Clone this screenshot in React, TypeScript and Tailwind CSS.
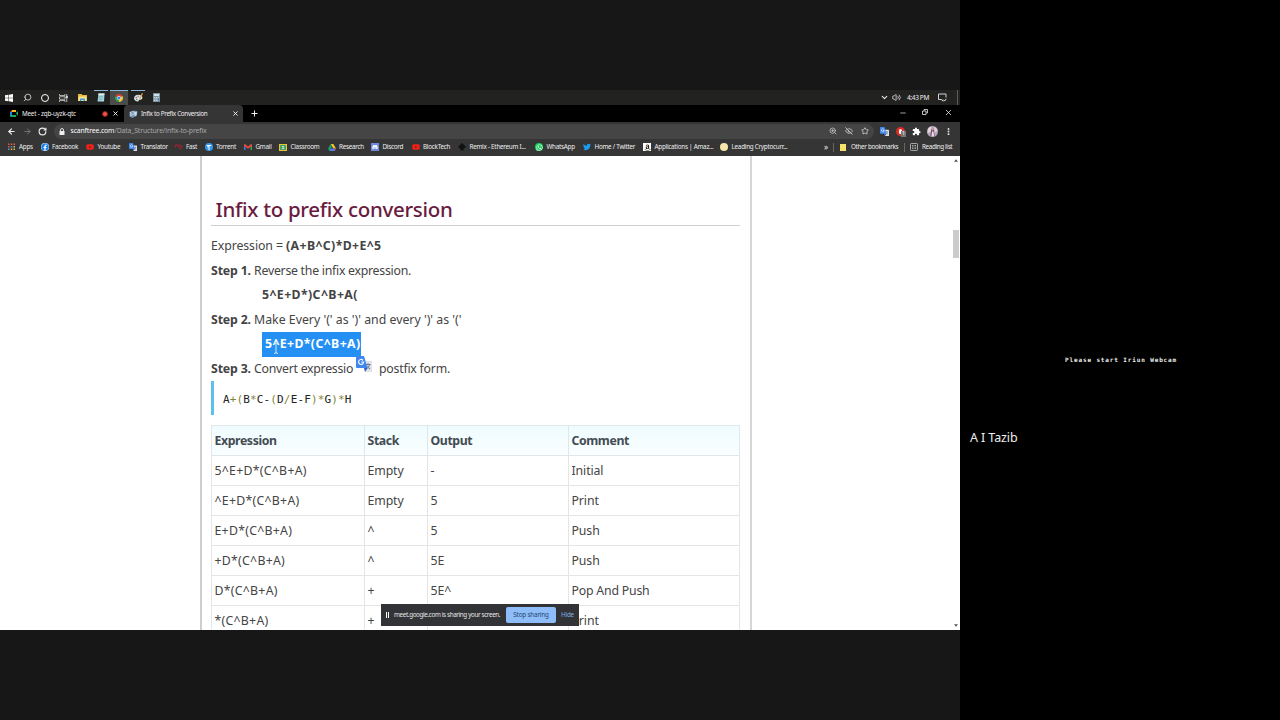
import React from "react";
import {
  Search, ArrowLeft, ArrowRight, RotateCw, Lock, X, Plus, Minus, ZoomIn, EyeOff, Star,
  ChevronDown, Volume2, EllipsisVertical,
} from "lucide-react";
import { FaFacebook, FaYoutube, FaWhatsapp, FaTwitter, FaAmazon, FaDiscord } from "react-icons/fa";
import { MdExtension } from "react-icons/md";

function TranslateIcon({ className = "" }: { className?: string }) {
  return (
    <svg viewBox="0 0 16 16" className={className}>
      <path d="M6 5h9a1 1 0 0 1 1 1v9a1 1 0 0 1-1 1H9z" fill="#dfe3e8" />
      <path d="M9.5 8.5h5M12 7.3v1.2M13.7 8.5c-.5 2-2 3.5-3.7 4.500M10.700 9.500c.6 1.500 1.800 2.600 3.500 3.300" stroke="#6b7785" strokeWidth="1" fill="none" />
      <path d="M1 0h7l3.500 12H1a1 1 0 0 1-1-1V1a1 1 0 0 1 1-1z" fill="#3f86ee" />
      <path d="M8 12h3.500L9 16z" fill="#2b5fc4" />
      <path d="M7 4.300A2.500 2.500 0 1 0 7.600 6H5.300" stroke="#fff" strokeWidth="1.100" fill="none" />
    </svg>
  );
}

function Chrome() {
  return (
    <svg viewBox="0 0 16 16" className="size-[8px]">
      <path d="M8 8 1.070 4A8 8 0 0 1 14.930 4z" fill="#e2402f" />
      <path d="M8 8 14.930 4A8 8 0 0 1 8 16z" fill="#f7c928" />
      <path d="M8 8v8A8 8 0 0 1 1.070 4z" fill="#2fa552" />
      <circle cx="8" cy="8" r="3.800" fill="#fff" />
      <circle cx="8" cy="8" r="3" fill="#3b7de9" />
    </svg>
  );
}

function Meet() {
  return (
    <svg viewBox="0 0 16 14" className="h-[7px] w-[8px]">
      <path d="M0 4 4 0v4z" fill="#e5433a" />
      <path d="M4 0h8v4H4z" fill="#f9bd16" />
      <path d="M0 4h4v6H0z" fill="#2a7ff0" />
      <path d="M0 10h12V7l4 5V2l-4 4v8H2a2 2 0 0 1-2-2z" fill="#16a757" />
    </svg>
  );
}

function Taskbar() {
  return (
    <div className="flex h-[15px] w-[960px] items-center bg-[#222221] text-[#eee]">
      <div className="w-[5px]" />
      <div className="w-[18px]">
        <svg viewBox="0 0 16 16" className="size-[8px]" fill="#fff">
          <path d="M0 2.500 7 1.500V7.500H0zM8 1.300 16 0v7.500H8zM0 8.500h7v6L0 13.500zM8 8.500h8V16L8 14.700z" />
        </svg>
      </div>
      <div className="w-[18px]"><Search className="size-[9px] -scale-x-100" strokeWidth={2} /></div>
      <div className="w-[18px]"><div className="size-[8px] rounded-full border-[1.500px] border-white" /></div>
      <div className="w-[19px]">
        <svg viewBox="0 0 18 16" className="h-[8px] w-[9px]" fill="none" stroke="#ddd" strokeWidth="1.500">
          <path d="M1 0v3h11V0M1 16v-3h11v3M1 5.500h11v5H1zM15.500 0v16" />
          <path d="M14 4.500h3v3h-3z" fill="#ddd" />
        </svg>
      </div>
      <div className="w-[14px]">
        <svg viewBox="0 0 18 14" className="h-[7px] w-[9px]">
          <path d="M0 0h7l2 2h9v12H0z" fill="#e8b83c" />
          <path d="M1 5h16v9H1z" fill="#fbe28c" />
          <path d="M4 9h10v5h-3v-2H7v2H4z" fill="#3d9be0" />
        </svg>
      </div>
      <div className="flex h-full w-[18px] flex-col items-center">
        <div className="h-[1px] w-[14px] bg-[#8db5d5]" />
        <svg viewBox="0 0 16 18" className="mt-[2px] h-[9px] w-[8px]">
          <path d="M3 1h12l-1 16H1z" fill="#a4d5db" />
          <path d="M3 1h12l-.4 3H2.500z" fill="#e6eff0" />
          <path d="M3.500 7h8M3 10h8M3 13h7" stroke="#619da9" />
        </svg>
      </div>
      <div className="flex h-full w-[18px] flex-col items-center bg-[#4a4b4b]">
        <div className="mb-[3px] h-[1px] w-full bg-[#8db5d5]" />
        <Chrome />
      </div>
      <div className="flex h-full w-[20px] flex-col items-center">
        <div className="h-[1px] w-[14px] bg-[#8db5d5]" />
        <svg viewBox="0 0 16 16" className="mt-[2px] size-[9px]">
          <path d="M8 3C3 3 0 6 0 9.500S3 15 7 15c2 0 1-3 3-3 3 0 5-1 5-4s-3-5-7-5z" fill="#dce5ea" />
          <circle cx="4" cy="8" r="1.500" fill="#d84a3f" />
          <circle cx="7.500" cy="6" r="1.400" fill="#459fd7" />
          <circle cx="5" cy="11.500" r="1.500" fill="#3aa563" />
          <path d="M9 10 14 0l2 1-5 10z" fill="#e5a73b" />
        </svg>
      </div>
      <div className="w-[730px] pl-[5px]">
        <svg viewBox="0 0 14 18" className="h-[9px] w-[7px]">
          <path d="M0 0h14v18H0z" fill="#7d929f" />
          <path d="M2 2h10v4H2z" fill="#cfe3ee" />
          <path d="M2 9h3M6 9h3M10 9h2M2 12h3M6 12h3M2 15h3M6 15h3" stroke="#dde7ed" strokeWidth="1.500" />
          <path d="M10 11h2v5h-2z" fill="#3f8fd0" />
        </svg>
      </div>
      <div className="w-[12px] pl-[2px]"><ChevronDown className="size-[9px]" strokeWidth={2.8} /></div>
      <div className="w-[15px] pl-[2px]"><Volume2 className="size-[9px]" strokeWidth={2} /></div>
      <div className="w-[33px] pl-0.5 text-[6.500px] tracking-[-0.350px] whitespace-nowrap">4:43 PM</div>
      <div className="flex-1">
        <svg viewBox="0 0 18 18" className="size-[9px]" fill="none" stroke="#e5e5e5" strokeWidth="1.800">
          <path d="M16 9V2H1v11h6l3 3.500V13M12 15.500a4 4 0 0 0 4-4" />
        </svg>
      </div>
      <div className="mr-[2px] h-full w-px bg-[#5b5b5b]" />
    </div>
  );
}

function TabBar() {
  return (
    <div className="flex h-[17px] w-[960px] items-center bg-black text-[6.300px] whitespace-nowrap text-[#eee]">
      <div className="flex w-[124px] items-center pl-[10px]">
        <Meet />
        <span className="ml-[4px] w-[80px] tracking-[-0.200px]">Meet - zqb-uyzk-qtc</span>
        <span className="flex size-[6px] items-center justify-center rounded-full border border-[#8c1d18] bg-[#f0544a]" />
        <X className="ml-[4px] size-[7px] text-white" strokeWidth={3} />
      </div>
      <div className="flex h-full w-[119px] items-center rounded-t-[4px] bg-[#353536] pl-[5px]">
        <svg viewBox="0 0 18 16" className="h-[8px] w-[9px]">
          <path d="m1 4 9-3 7 2-2 9-8 4-6-3z" fill="#718fa9" />
          <path d="m2 4 8-2 1 6-8 5zM11 4l5-1-1 8-4 1z" fill="#c8dcec" />
          <path d="m4 6 5-2M4 9l6-3" stroke="#4f769b" strokeWidth="1.500" />
        </svg>
        <span className="ml-[3px] w-[91px] tracking-[-0.310px]">Infix to Prefix Conversion</span>
        <X className="size-[7px] text-white" strokeWidth={3} />
      </div>
      <Plus className="ml-[7px] size-[9px] text-white" strokeWidth={2.500} />
      <div className="flex-1" />
      <Minus className="mr-[15px] mb-[2px] size-[8px]" strokeWidth={2} />
      <svg viewBox="0 0 12 12" className="mr-[16px] mb-[3px] size-[6px]" fill="none" stroke="#ddd" strokeWidth="1.700">
        <path d="M1 4h7v7H1zM4 3.500V1h7v7H8.500" />
      </svg>
      <X className="mr-[7px] mb-[2px] size-[9px]" strokeWidth={2} />
    </div>
  );
}

function Toolbar() {
  return (
    <div className="flex h-[17px] w-[960px] items-center bg-[#353536] pt-px text-[#eee]">
      <ArrowLeft className="ml-[6.500px] size-[9px]" strokeWidth={3} />
      <ArrowRight className="ml-[7px] size-[9px] text-[#777]" strokeWidth={2.500} />
      <RotateCw className="ml-[6.500px] size-[9px]" strokeWidth={3} />
      <div className="ml-[6.500px] flex h-[15px] w-[820px] items-center rounded-full bg-[#454546]">
        <svg viewBox="0 0 12 14" className="ml-[5px] h-[7px] w-[6px]" fill="#eee">
          <path d="M1 6h10v8H1z" />
          <path d="M3 6V4a3 3 0 0 1 6 0v2" fill="none" stroke="#eee" strokeWidth="1.800" />
        </svg>
        <span className="ml-[6px] text-[6.800px] tracking-[-0.110px] whitespace-nowrap text-[#a8a8a8]">
          <span className="text-white">scanftree.com</span>/Data_Structure/infix-to-prefix
        </span>
        <span className="flex-1" />
        <ZoomIn className="mr-[8px] size-[8px] text-[#ccc]" strokeWidth={2.300} />
        <EyeOff className="mr-[8px] size-[8px] text-[#ccc]" strokeWidth={2.500} />
        <Star className="mr-[5px] size-[8px] text-[#ddd]" strokeWidth={2.300} />
      </div>
      <TranslateIcon className="ml-[6.500px] size-[9px]" />
      <div className="relative ml-[7px] flex size-[9px] items-center justify-center rounded-full bg-[#da2d24]">
        <span className="h-[5px] w-[3px] rounded-sm bg-white" />
        <span className="absolute top-[4px] left-[5px] flex h-[6px] w-[5px] items-center justify-center bg-[#777] text-[5px] text-white">1</span>
      </div>
      <MdExtension className="ml-[6.500px] size-[9px] text-white" />
      <svg viewBox="0 0 20 20" className="ml-[6px] size-[11px]">
        <circle cx="10" cy="10" r="10" fill="#b7a6bb" />
        <path d="M2 5q3-4 6-4l-1 9-6 3zM13 1q5 2 6 8l-5 2z" fill="#e3d5e2" />
        <path d="M8 6q2-3 4 0l2 13H6z" fill="#713f58" />
        <circle cx="10" cy="6" r="2" fill="#d9a49a" />
        <path d="M9 10h3l1 9H8z" fill="#e7dce9" />
      </svg>
      <EllipsisVertical className="ml-[6px] size-[9px]" strokeWidth={3} />
    </div>
  );
}

const bookmarks: { w: string; name: string; icon: React.ReactNode }[] = [
  {
    w: "w-[33px]", name: "Apps", icon: (
      <svg viewBox="0 0 14 16" className="h-[8px] w-[7px]">
        <path d="M0 1h3v3H0zM0 6h3v3H0z" fill="#e15347" />
        <path d="M5.500 1h3v3h-3zM11 1h3v3h-3z" fill="#e1694f" />
        <path d="M5.500 6h3v3h-3zM0 11h3v3H0z" fill="#4f9cd9" />
        <path d="M11 6h3v3h-3zM5.500 11h3v3h-3zM11 11h3v3h-3z" fill="#d9bc4f" />
      </svg>
    ),
  },
  { w: "w-[45.500px]", name: "Facebook", icon: <FaFacebook className="size-[8px] rounded-full bg-white text-[#1680f0]" /> },
  { w: "w-[43px]", name: "Youtube", icon: <FaYoutube className="size-[8px] text-[#f32016]" /> },
  { w: "w-[45.500px]", name: "Translator", icon: <TranslateIcon className="size-[8px]" /> },
  {
    w: "w-[30px]", name: "Fast", icon: (
      <svg viewBox="0 0 16 16" className="size-[8px]" fill="none" stroke="#a51f2e" strokeWidth="2.500">
        <path d="M1 9V4h5l5 9M9 4q5 0 5 6" />
      </svg>
    ),
  },
  {
    w: "w-[39.500px]", name: "Torrent", icon: (
      <svg viewBox="0 0 16 16" className="size-[8px]">
        <circle cx="8" cy="8" r="8" fill="#3496ed" />
        <path d="M3.500 5h9M8 5v9M6 5v4" stroke="#fff" strokeWidth="2" fill="none" />
      </svg>
    ),
  },
  {
    w: "w-[35px]", name: "Gmail", icon: (
      <svg viewBox="0 0 16 12" className="h-[6px] w-[8px]">
        <path d="M0 1h3v11H0z" fill="#3c7de5" />
        <path d="M13 1h3v11h-3z" fill="#33a853" />
        <path d="M0 1.500 2 0l6 5 6-5 2 1.500V4L8 9.500 0 4z" fill="#e6463b" />
      </svg>
    ),
  },
  {
    w: "w-[48.500px]", name: "Classroom", icon: (
      <svg viewBox="0 0 16 14" className="h-[7px] w-[8px]">
        <path d="M0 0h16v14H0z" fill="#eec535" />
        <path d="M2 2h12v10H2z" fill="#48a260" />
        <circle cx="8" cy="5.500" r="1.700" fill="#fff" />
        <path d="M4.500 10q3.500-3.500 7 0z" fill="#fff" />
      </svg>
    ),
  },
  {
    w: "w-[43.500px]", name: "Research", icon: (
      <svg viewBox="0 0 16 14" className="h-[7px] w-[8px]">
        <path d="M5.500 0h5L16 9h-5.200z" fill="#f8c72c" />
        <path d="M5.500 0 8 4.500 2.700 14 0 9.300z" fill="#1ba261" />
        <path d="M5.400 9H16l-2.700 5H2.700z" fill="#4384ef" />
        <path d="M12 9h4l-2.700 5z" fill="#e5473c" />
      </svg>
    ),
  },
  { w: "w-[40.500px]", name: "Discord", icon: <span className="flex size-[8px] items-center justify-center bg-[#7089dc]"><FaDiscord className="size-[6px] text-white" /></span> },
  { w: "w-[46.500px]", name: "BlockTech", icon: <FaYoutube className="size-[8px] text-[#f32016]" /> },
  {
    w: "w-[77px]", name: "Remix - Ethereum I...", icon: (
      <svg viewBox="0 0 16 16" className="size-[8px]" fill="#111">
        <path d="M8 0l4 4 4 4-4 3-1 1v3H5v-3L4 11 0 8l4-4z" />
      </svg>
    ),
  },
  { w: "w-[48px]", name: "WhatsApp", icon: <span className="flex size-[8px] items-center justify-center rounded-full bg-[#1ad05c]"><FaWhatsapp className="size-[7px] text-white" /></span> },
  { w: "w-[60px]", name: "Home / Twitter", icon: <FaTwitter className="size-[8px] text-[#1d9bf0]" /> },
  { w: "w-[77px]", name: "Applications | Amaz...", icon: <span className="flex size-[8px] items-center justify-center bg-white"><FaAmazon className="size-[7px] text-[#2a2114]" /></span> },
  { w: "w-[104px]", name: "Leading Cryptocurr...", icon: <span className="block size-[8px] rounded-full bg-[#f8e7a9]" /> },
];

function Bookmarks() {
  return (
    <div className="flex h-[17px] w-[960px] items-center bg-[#353536] pb-px pl-[7.500px] text-[6.300px] tracking-[-0.250px] whitespace-nowrap text-[#eee]">
      {bookmarks.map((b) => (
        <div key={b.name} className={`flex shrink-0 items-center ${b.w}`}>
          <span className="flex w-[11.500px] shrink-0">{b.icon}</span>
          <span>{b.name}</span>
        </div>
      ))}
      <span className="w-[9px] text-[8px]">»</span>
      <span className="h-[9px] w-px bg-[#666]" />
      <span className="ml-[6px] h-[7px] w-[6px] bg-[#f8e26c]" />
      <span className="ml-[5px] w-[53px] tracking-[-0.330px]">Other bookmarks</span>
      <span className="h-[9px] w-px bg-[#666]" />
      <svg viewBox="0 0 16 16" className="ml-[5px] size-[8px]" fill="none" stroke="#ccc" strokeWidth="1.500">
        <rect x="1" y="1" width="14" height="14" rx="1.500" />
        <path d="M4 5h3M4 8h3M4 11h3M9 5h3M9 8h3M9 11h3" />
      </svg>
      <span className="ml-[4px] tracking-[-0.350px]">Reading list</span>
    </div>
  );
}

const rows = [
  ["5^E+D*(C^B+A)", "Empty", "-", "Initial"],
  ["^E+D*(C^B+A)", "Empty", "5", "Print"],
  ["E+D*(C^B+A)", "^", "5", "Push"],
  ["+D*(C^B+A)", "^", "5E", "Push"],
  ["D*(C^B+A)", "+", "5E^", "Pop And Push"],
  ["*(C^B+A)", "+", "5E^D", "Print"],
];

function Table() {
  return (
    <div className="mt-[10px] w-[529px] border-t border-l border-[#e2e8ea]">
      <div className="grid h-[30px] grid-cols-[153px_63px_141px_171px] bg-gradient-to-b from-[#effcff] to-[#fafeff] font-bold tracking-[-0.400px]">
        {["Expression", "Stack", "Output", "Comment"].map((h) => (
          <div key={h} className="flex items-center border-r border-b border-[#dde8ea] pt-[2px] pl-[2.500px] text-[#434c52]">{h}</div>
        ))}
      </div>
      {rows.map((r) => (
        <div key={r[0]} className="grid h-[30px] grid-cols-[153px_63px_141px_171px]">
          {r.map((c, i) => (
            <div key={i} className={`flex items-center border-r border-b border-[#e5e5e5] pt-[2px] pl-[2.500px] ${i === 0 ? "tracking-[0.270px]" : c.length > 10 ? "tracking-[-0.200px]" : "tracking-[-0.100px]"}`}>{c}</div>
          ))}
        </div>
      ))}
    </div>
  );
}

function Article() {
  return (
    <div className="h-[474px] w-[552px] overflow-hidden border-r-2 border-l-2 border-r-[#d6d6d6] border-l-[#cecece] pl-[9px] text-[12.300px] text-[#444]">
      <h1 className="mt-[37px] flex h-[33px] w-[529px] items-center border-b border-[#d0d0d0] pt-px pl-[4.500px] text-[20.500px] font-medium tracking-[-0.300px] text-[#6a1b40]">
        Infix to prefix conversion
      </h1>
      <div className="mt-[8px] h-[24.500px] leading-[24px]"><span className="tracking-[-0.080px]">Expression = </span><b className="tracking-[0.370px]">(A+B^C)*D+E^5</b></div>
      <div className="h-[24.500px] leading-[24.500px]"><b className="tracking-[-0.150px]">Step 1.</b> <span className="tracking-[-0.260px]">Reverse the infix expression.</span></div>
      <div className="h-[24.500px] pl-[51px] leading-[24px] font-bold tracking-[0.400px]">5^E+D*)C^B+A(</div>
      <div className="h-[24.500px] leading-[24.500px]"><b className="tracking-[-0.150px]">Step 2.</b> Make Every '(' as ')' and every ')' as '('</div>
      <div className="relative ml-[51px] h-[24.500px] w-[99px] bg-[#2490f3] pl-[3px] leading-[24.500px] font-bold tracking-[0.370px] whitespace-nowrap text-white">
        5^E+D*(C^B+A)
        <svg viewBox="0 0 6 12" className="absolute top-[10px] left-[11px] h-[12px] w-[6px]" fill="none" stroke="#d5e6f5" strokeWidth="1">
          <path d="M1 .5q2 0 2 1.500v8q0 1.500-2 1.500M5 .5Q3 .5 3 2M5 11.500q-2 0-2-1.500" />
        </svg>
        <TranslateIcon className="absolute top-[24px] left-[94px] z-10 size-[16px]" />
      </div>
      <div className="flex h-[24.500px] leading-[24.500px]">
        <span className="w-[168px] whitespace-nowrap"><b className="tracking-[-0.150px]">Step 3.</b> <span className="tracking-[-0.270px]">Convert expressio</span></span>
        <span className="tracking-[-0.230px]">postfix form.</span>
      </div>
      <div className="flex h-[34px] items-center border-l-[3px] border-[#5cc0ea] pt-[4px] pl-[9px] font-['DejaVu_Sans_Mono'] text-[11px] tracking-[0.130px] text-[#222]">
        <span>A<i className="text-[#838336] not-italic">+(</i>B<i className="text-[#838336] not-italic">*</i>C-<i className="text-[#838336] not-italic">(</i>D<i className="text-[#838336] not-italic">/</i>E-F<i className="text-[#838336] not-italic">)*</i>G<i className="text-[#838336] not-italic">)*</i>H</span>
      </div>
      <Table />
    </div>
  );
}

export default function App() {
  return (
    <div className="flex h-[720px] w-[1280px] overflow-hidden bg-black font-['Noto_Sans',sans-serif]">
      <div className="relative flex w-[960px] flex-col bg-[#171717]">
        <div className="h-[90px]" />
        <Taskbar />
        <TabBar />
        <Toolbar />
        <Bookmarks />
        <div className="flex h-[474px] w-[960px] justify-between bg-white">
          <div className="w-[200px]" />
          <Article />
          <div className="flex-1" />
          <div className="flex w-[8px] flex-col items-center">
            <svg viewBox="0 0 6 4" className="mt-[3px] h-[3px] w-[4px]"><path d="M0 4 3 0l3 4z" fill="#555" /></svg>
            <div className="mt-[68px] h-[28px] w-[6px] bg-[#cbcbcb]" />
            <div className="flex-1" />
            <svg viewBox="0 0 6 4" className="mb-[3px] h-[3px] w-[4px]"><path d="M0 0l3 4 3-4z" fill="#555" /></svg>
          </div>
        </div>
        <div className="absolute top-[604px] left-[381px] flex h-[22px] w-[198px] items-center bg-[#313336] text-[6.300px] tracking-[-0.180px] whitespace-nowrap text-[#e5e5e5]">
          <span className="ml-[5px] h-[6px] w-[3px] border-r border-l border-white" />
          <span className="ml-[5px] w-[112px] tracking-[-0.360px]">meet.google.com is sharing your screen.</span>
          <span className="flex h-[16px] w-[50px] items-center justify-center rounded-[2px] bg-[#8ebdfa] text-[#22456f]">Stop sharing</span>
          <span className="ml-[5px] text-[#83aee4]">Hide</span>
        </div>
      </div>
      <div className="flex w-[320px] flex-col bg-black">
        <div className="mt-[355px] h-[9px] pl-[105px] font-['DejaVu_Sans_Mono'] text-[6px] leading-[9px] font-bold tracking-[0.870px] text-[#eee]">Please start Iriun Webcam</div>
        <div className="mt-[64px] pl-[10px] text-[12.500px] leading-[20px] tracking-[-0.100px] text-[#eee]">A I Tazib</div>
      </div>
    </div>
  );
}
